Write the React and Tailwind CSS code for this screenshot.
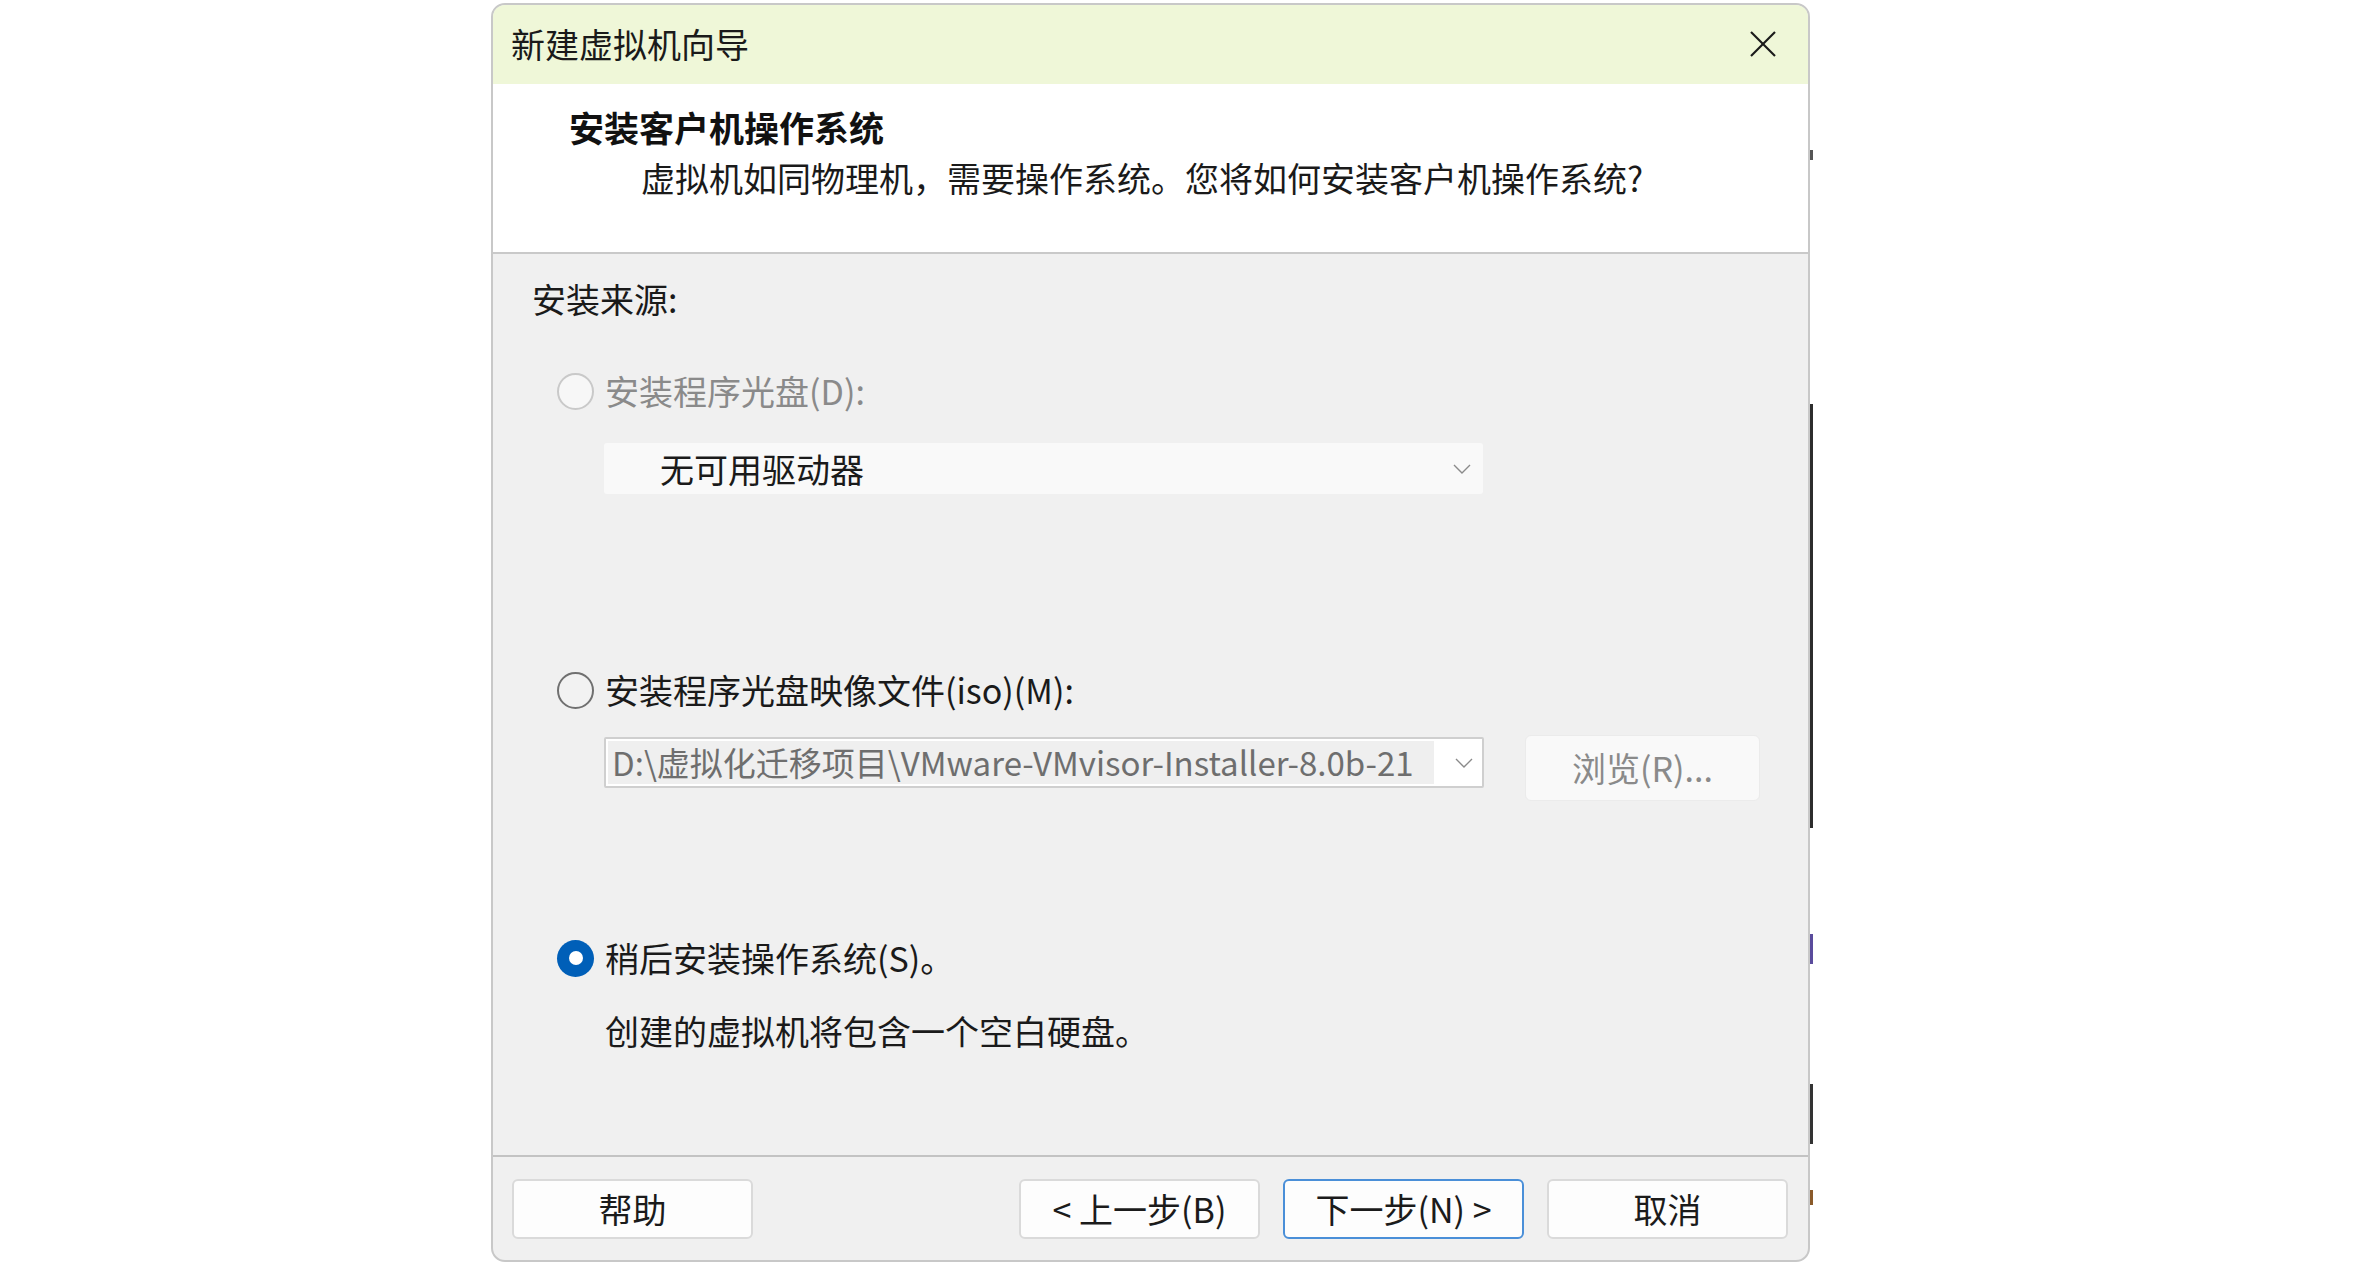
import React from "react";

const FONT = "[font-family:'Noto_Sans_CJK_SC','Noto_Sans',sans-serif]";

function Radio({ state }) {
  if (state === "checked") {
    return (
      <div className="w-[37px] h-[37px] rounded-full bg-[#005fb8] flex items-center justify-center shrink-0">
        <div className="w-[14px] h-[14px] rounded-full bg-white" />
      </div>
    );
  }
  if (state === "disabled") {
    return <div className="w-[37px] h-[37px] rounded-full border-2 border-[#c9c9c9] bg-[#f7f7f7] shrink-0" />;
  }
  return <div className="w-[37px] h-[37px] rounded-full border-2 border-[#707070] bg-[#f2f2f2] shrink-0" />;
}

function Chevron() {
  return (
    <svg width="18" height="10" viewBox="0 0 18 10" className="shrink-0">
      <polyline points="1,1 9,9 17,1" fill="none" stroke="#8a8a8a" strokeWidth="1.4" />
    </svg>
  );
}

function Button({ children, primary }) {
  return (
    <div
      className={
        "w-[241px] h-[60px] rounded-[6px] bg-[#fdfdfd] flex items-center justify-center text-[34px] leading-none text-[#1b1b1b] " +
        (primary ? "border-2 border-[#4a8fd8]" : "border-2 border-[#dadada]")
      }
    >
      {children}
    </div>
  );
}

export default function App() {
  return (
    <div className={"relative min-h-screen w-full bg-white " + FONT}>
      {/* slivers of windows behind the dialog */}
      <div className="absolute left-[1810px] top-[150px] w-[3px] h-[10px] bg-[#555]" />
      <div className="absolute left-[1810px] top-[404px] w-[3px] h-[424px] bg-[#2d2d2d]" />
      <div className="absolute left-[1810px] top-[934px] w-[3px] h-[30px] bg-[#5a4b9c]" />
      <div className="absolute left-[1810px] top-[1084px] w-[3px] h-[60px] bg-[#333]" />
      <div className="absolute left-[1810px] top-[1190px] w-[3px] h-[15px] bg-[#8a5a2a]" />

      <div className="pl-[491px] pt-[3px]">
        <div className="relative w-[1319px] h-[1259px] border-2 border-[#c8c8c8] rounded-[14px] overflow-hidden flex flex-col bg-[#f0f0f0]">
          {/* Title bar */}
          <div className="h-[79px] bg-[#eff7d8] flex items-center justify-between pl-[18px] pr-[31px] shrink-0">
            <div className="text-[34px] leading-none text-[#1a1a1a] -mt-[2px]">新建虚拟机向导</div>
            <svg width="28" height="28" viewBox="0 0 28 28" className="-mt-[2px]">
              <line x1="2" y1="2" x2="26" y2="26" stroke="#1a1a1a" strokeWidth="2.2" />
              <line x1="26" y1="2" x2="2" y2="26" stroke="#1a1a1a" strokeWidth="2.2" />
            </svg>
          </div>

          {/* Header */}
          <div className="h-[170px] bg-white border-b-2 border-[#c9c9c9] shrink-0 pl-[76px] pt-[22px]">
            <div className="text-[35px] leading-[42px] font-bold text-[#111]">安装客户机操作系统</div>
            <div className="text-[34px] leading-[42px] mt-[9px] pl-[72px] text-[#1a1a1a]">
              虚拟机如同物理机，需要操作系统。您将如何安装客户机操作系统?
            </div>
          </div>

          {/* Body */}
          <div className="flex-1 flex flex-col pt-[24px] pl-[39px]">
            <div className="text-[34px] leading-[42px] text-[#1a1a1a]">安装来源:</div>

            <div className="mt-[50px] ml-[25px] flex items-center gap-[11px] h-[42px]">
              <Radio state="disabled" />
              <div className="text-[34px] leading-[42px] text-[#8a8a8a]">安装程序光盘(D):</div>
            </div>

            <div className="mt-[31px] ml-[72px] w-[879px] h-[51px] bg-[#f9f9f9] rounded-[3px] flex items-center justify-between pl-[56px] pr-[12px]">
              <div className="text-[34px] leading-none text-[#1a1a1a]">无可用驱动器</div>
              <Chevron />
            </div>

            <div className="mt-[175px] ml-[25px] flex items-center gap-[11px] h-[42px]">
              <Radio state="normal" />
              <div className="text-[34px] leading-[42px] text-[#1a1a1a]">安装程序光盘映像文件(iso)(M):</div>
            </div>

            <div className="mt-[24px] ml-[72px] flex items-start">
              <div className="mt-[2px] w-[880px] h-[51px] border-2 border-[#cfcfcf] bg-white rounded-[2px] flex items-center pl-[2px]">
                <div className="w-[826px] h-[43px] bg-[#efefef] whitespace-nowrap flex items-center pl-[4px]">
                  <span className="text-[33px] leading-[43px] text-[#6e6e6e]">
                    D:\虚拟化迁移项目\VMware-VMvisor-Installer-8.0b-21
                  </span>
                </div>
                <div className="flex-1 flex justify-end pr-[9px]">
                  <Chevron />
                </div>
              </div>
              <div className="ml-[41px] w-[235px] h-[66px] rounded-[6px] bg-[#f9f9f9] border border-[#ebebeb] flex items-center justify-center text-[34px] leading-none text-[#8a8a8a]">
                浏览(R)...
              </div>
            </div>

            <div className="mt-[136px] ml-[25px] flex items-center gap-[11px] h-[42px]">
              <Radio state="checked" />
              <div className="text-[34px] leading-[42px] text-[#1a1a1a]">稍后安装操作系统(S)。</div>
            </div>

            <div className="mt-[31px] ml-[73px] text-[34px] leading-[42px] text-[#1a1a1a]">
              创建的虚拟机将包含一个空白硬盘。
            </div>
          </div>

          {/* Footer */}
          <div className="h-[105px] shrink-0 border-t-2 border-[#c3c3c3] flex items-start pt-[22px] pl-[19px] pr-[20px]">
            <Button>帮助</Button>
            <div className="flex-1" />
            <div className="flex gap-[23px]">
              <Button>&lt; 上一步(B)</Button>
              <Button primary>下一步(N) &gt;</Button>
              <Button>取消</Button>
            </div>
          </div>
        </div>
      </div>
    </div>
  );
}
